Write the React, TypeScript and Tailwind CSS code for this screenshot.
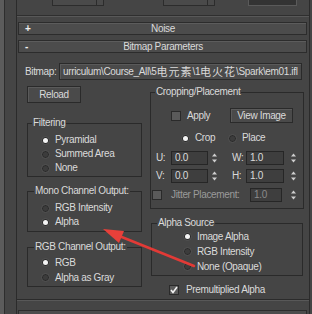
import React from "react";

const Radio = ({ on }: { on?: boolean }) => (
  <span className="w-[9px] h-[9px] rounded-full bg-[#2b2b2b] border border-[#555] flex items-center justify-center shrink-0">
    {on ? <span className="w-[5px] h-[5px] rounded-full bg-[#f4f4f4]" /> : <span className="w-[5px] h-[5px] rounded-full bg-[#3c3c3c]" />}
  </span>
);

const Check = ({ on }: { on?: boolean }) => (
  <span className="w-[10px] h-[10px] bg-[#5a5a5a] border border-[#2a2a2a] flex items-center justify-center shrink-0">
    {on && (
      <svg width="8" height="8" viewBox="0 0 8 8">
        <path d="M1 4 L3 6.5 L7 1" stroke="#f2f2f2" strokeWidth="1.6" fill="none" />
      </svg>
    )}
  </span>
);

const Spin = () => (
  <svg width="7" height="14" viewBox="0 0 7 14" className="shrink-0">
    <path d="M3.5 2.5 L6 5.5 H1 Z" fill="#cfcfcf" />
    <path d="M3.5 11.5 L6 8.5 H1 Z" fill="#cfcfcf" />
  </svg>
);

const Field = ({ v, className }: { v: string; className: string }) => (
  <div className={`h-[14px] bg-[#3e3e3e] border border-[#262626] pl-[3px] leading-[12px] ${className}`}>{v}</div>
);

const Row = ({ on, label }: { on?: boolean; label: string }) => (
  <div className="flex items-center gap-[5px] whitespace-nowrap">
    <Radio on={on} />
    <span>{label}</span>
  </div>
);

const Header = ({ sign, title }: { sign: string; title: string }) => (
  <div className="ml-[1px] mr-[2px] h-[13px] bg-[#4c4c4c] border border-[#2c2c2c] shadow-[inset_0_1px_0_#5c5c5c] flex items-center px-[6px] leading-[11px]">
    <span className="w-[8px] text-[#f0f0f0] font-bold">{sign}</span>
    <span className="flex-1 text-center pr-[7px]">{title}</span>
  </div>
);

export default function App() {
  return (
    <div
      className="w-[312px] h-[314px] bg-[#454545] flex overflow-hidden relative text-[10px] leading-[12px] tracking-[-0.35px] text-[#dadada]"
      style={{ fontFamily: "'Liberation Sans','Noto Sans CJK SC',sans-serif" }}
    >
      {/* left frame strip */}
      <div className="w-[4px] bg-[#5c5c5c]" />
      <div className="w-[1px] bg-[#2e2e2e]" />
      <div className="w-[11px]" />

      {/* rollout column */}
      <div className="w-[294px] border-l border-[#2b2b2b] border-r flex flex-col [&>*]:shrink-0">
        {/* previous rollout tail */}
        <div className="h-[16px] border-b border-[#2f2f2f] shadow-[0_1px_0_#585858] flex items-start">
          <div className="ml-[35px] w-[52px] h-[6px] border-x border-b border-[#2c2c2c] bg-[#4a4a4a] flex justify-end">
            <div className="w-[7px] h-[5px] border-l border-[#2c2c2c]" />
          </div>
          <div className="ml-[59px] w-[52px] h-[6px] border-x border-b border-[#2c2c2c] bg-[#4a4a4a] flex justify-end">
            <div className="w-[7px] h-[5px] border-l border-[#2c2c2c]" />
          </div>
          <div className="ml-[33px] w-[49px] h-[6px] border-x border-b border-[#5a5a5a] bg-[#333]" />
        </div>

        <div className="mt-[6px]">
          <Header sign="+" title="Noise" />
        </div>
        <div className="mt-[5px]">
          <Header sign="-" title="Bitmap Parameters" />
        </div>

        {/* bitmap path */}
        <div className="mt-[10px] h-[17px] flex items-center pl-[8px]">
          <span className="w-[34px]">Bitmap:</span>
          <div className="w-[243px] h-[17px] bg-[#4a4a4a] border border-[#2a2a2a] shadow-[inset_1px_1px_0_#5a5a5a] pl-[3px] flex items-center overflow-hidden whitespace-nowrap">
            urriculum\Course_All\5<span className="text-[11px] tracking-[1px]">电元素</span>\1<span className="text-[11px] tracking-[1px]">电火花</span>\Spark\em01.ifl
          </div>
        </div>

        <div className="flex pl-[10px] gap-[8px]">
          {/* left column */}
          <div className="w-[115px] flex flex-col">
            <div className="mt-[6px] w-[54px] h-[17px] bg-[#4a4a4a] border border-[#2a2a2a] shadow-[inset_1px_1px_0_#5a5a5a] flex items-center justify-center">
              Reload
            </div>

            <fieldset className="mt-[14px] border border-[#2a2a2a] pl-[13px] pt-[4px] pb-[1px]">
              <legend className="ml-[-9px] px-[1px] whitespace-nowrap">Filtering</legend>
              <div className="h-[14px] flex items-center"><Row on label="Pyramidal" /></div>
              <div className="h-[14px] flex items-center"><Row label="Summed Area" /></div>
              <div className="h-[14px] flex items-center"><Row label="None" /></div>
            </fieldset>

            <fieldset className="mt-[8px] border border-[#2a2a2a] pl-[13px] pt-[4px] pb-[2px]">
              <legend className="ml-[-7px] px-[1px] whitespace-nowrap">Mono Channel Output:</legend>
              <div className="h-[14px] flex items-center"><Row label="RGB Intensity" /></div>
              <div className="h-[14px] flex items-center"><Row on label="Alpha" /></div>
            </fieldset>

            <fieldset className="mt-[9px] border border-[#2a2a2a] pl-[13px] pt-[2px] pb-[1px]">
              <legend className="ml-[-7px] px-[1px] whitespace-nowrap">RGB Channel Output:</legend>
              <div className="h-[15px] flex items-center"><Row on label="RGB" /></div>
              <div className="h-[15px] flex items-center"><Row label="Alpha as Gray" /></div>
            </fieldset>
          </div>

          {/* right column */}
          <div className="w-[154px] flex flex-col">
            <fieldset className="mt-[6px] border border-[#2a2a2a] pb-[7px]">
              <legend className="ml-[4px] px-[1px] whitespace-nowrap">Cropping/Placement</legend>
              <div className="mt-[9px] h-[17px] flex items-center pl-[20px]">
                <div className="w-[59px] flex items-center gap-[6px]">
                  <Check />
                  <span>Apply</span>
                </div>
                <div className="w-[63px] h-[15px] bg-[#4a4a4a] border border-[#2a2a2a] shadow-[inset_1px_1px_0_#5a5a5a] flex items-center justify-center whitespace-nowrap">
                  View Image
                </div>
              </div>
              <div className="mt-[7px] h-[14px] flex items-center pl-[30px]">
                <div className="w-[47px]"><Row on label="Crop" /></div>
                <Row label="Place" />
              </div>
              <div className="mt-[6px] h-[14px] flex items-center pl-[5px]">
                <span className="w-[15px]">U:</span>
                <Field v="0.0" className="w-[37px]" />
                <span className="ml-[3px]"><Spin /></span>
                <span className="ml-[14px] w-[14px]">W:</span>
                <Field v="1.0" className="w-[38px]" />
                <span className="ml-[6px]"><Spin /></span>
              </div>
              <div className="mt-[4px] h-[14px] flex items-center pl-[5px]">
                <span className="w-[15px]">V:</span>
                <Field v="0.0" className="w-[37px]" />
                <span className="ml-[3px]"><Spin /></span>
                <span className="ml-[14px] w-[14px]">H:</span>
                <Field v="1.0" className="w-[38px]" />
                <span className="ml-[6px]"><Spin /></span>
              </div>
              <div className="mt-[6px] h-[12px] flex items-center pl-[1px]">
                <Check />
                <span className="ml-[9px] w-[79px] whitespace-nowrap text-[#9a9a9a]">Jitter Placement:</span>
                <Field v="1.0" className="w-[32px] h-[12px] leading-[10px] text-[#8a8a8a]" />
                <span className="ml-[8px]"><Spin /></span>
              </div>
            </fieldset>

            <fieldset className="mt-[8px] border border-[#2a2a2a] pl-[31px] pt-[0px] pb-[1px] mr-[1px] ml-[1px]">
              <legend className="ml-[-26px] px-[1px] whitespace-nowrap">Alpha Source</legend>
              <div className="h-[15px] flex items-center"><Row on label="Image Alpha" /></div>
              <div className="h-[15px] flex items-center"><Row label="RGB Intensity" /></div>
              <div className="h-[15px] flex items-center"><Row label="None (Opaque)" /></div>
            </fieldset>

            <div className="mt-[7px] h-[14px] flex items-center pl-[19px] gap-[7px] whitespace-nowrap">
              <Check on />
              <span>Premultiplied Alpha</span>
            </div>
          </div>
        </div>

        <div className="mt-auto mb-[10px] h-[1px] bg-[#2b2b2b] shadow-[0_1px_0_#585858]" />
        <div className="ml-[1px] mr-[2px] h-[4px] bg-[#4c4c4c] border-x border-t border-[#2c2c2c]" />
      </div>

      {/* red arrow annotation */}
      <svg className="absolute left-0 top-0 pointer-events-none" width="312" height="314" viewBox="0 0 312 314">
        <line x1="194" y1="266" x2="118" y2="235.5" stroke="#e23a36" strokeWidth="2.5" strokeLinecap="round" />
        <polygon points="103,229 124,231 119,243" fill="#e8403a" />
      </svg>
    </div>
  );
}
